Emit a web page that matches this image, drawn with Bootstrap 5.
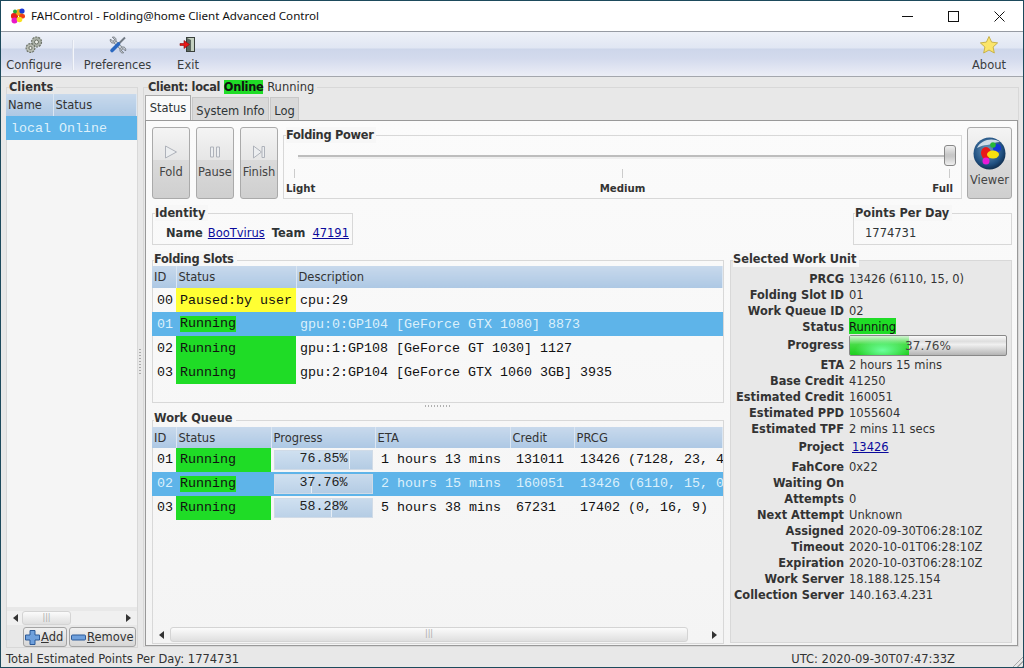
<!DOCTYPE html>
<html lang="en">
<head>
<meta charset="utf-8">
<title>FAHControl</title>
<link href="https://cdn.jsdelivr.net/npm/bootstrap@5.3.0/dist/css/bootstrap.min.css" rel="stylesheet">
<style>
html,body{height:100%;overflow:hidden;background:#1d4a5c;}
body{font:11.5px/16px "DejaVu Sans",sans-serif;color:#2e3436;}
b{font-size:11.4px;font-weight:700;}
.fah-app{width:1024px;height:668px;padding:1px;}
.fah-in{height:100%;background:#e8e8e8;}
.fah-title{height:31px;background:#fff;padding-left:9px;font:11.6px/30px "Noto Sans",sans-serif;color:#111;border-bottom:1px solid #979ba3;flex:none;}
.fah-logo{margin-right:5px;margin-bottom:1px;}
.fah-wc{width:46px;height:30px;}
.fah-wc:last-child{margin-right:1px;}
.fah-tool{height:45px;flex:none;border-bottom:1px solid #a4a7ad;background:linear-gradient(#eef1f8 0,#e0e6f3 37%,#cdd6ea 38%,#d3daed 60%,#eceef6 100%);}
.fah-titem{display:flex;flex-direction:column;align-items:center;color:#3a3d3f;padding-top:3px;height:44px;}
.fah-titem svg{height:20px;margin-bottom:2px;}
.fah-t1{width:66px;margin-right:5px;}
.fah-t2{width:87px;}
.fah-t3{width:54px;}
.fah-t4{width:60px;margin-right:4px;}
.fah-tsep{width:2px;height:30px;margin-top:8px;border-left:1px solid #d9dee9;background:#f4f6fb;}
.fah-main{flex:1;min-height:0;padding-top:10px;}
.fah-frame{border:1px solid #d8d8d8;}
.fah-leg{display:block;width:fit-content;font-weight:700;font-size:11.4px;line-height:16px;margin-top:-9px;margin-left:2px;padding-right:3px;background:#e8e8e8;color:#333;}
.fah-tight{letter-spacing:-.3px;}
.fah-left{width:132px;margin-left:5px;height:561px;flex:none;}
.fah-list{flex:1;background:#f5f5f5;min-height:0;margin-top:-1px;}
.fah-grip{width:5px;flex:none;}
.fah-gripv{width:2px;height:26px;margin:262px 0 0 1px;background:repeating-linear-gradient(#aaa 0 1px,transparent 1px 3px);}
.fah-right{width:876px;height:560px;flex:none;}
.fah-right>.fah-leg{margin-left:4px;}
.fah-run{font-weight:400;font-size:11.5px;letter-spacing:0;}
.fah-tabs{padding-left:1px;height:24px;margin-top:1px;flex:none;}
.fah-tab{height:23px;margin-top:1px;margin-right:1px;border:1px solid #c8c8c8;border-bottom:0;background:#d9d9d9;line-height:26px;text-align:center;}
.fah-tab.on{background:#fafafa;height:25px;margin-top:-1px;margin-bottom:-1px;border-color:#aaa;position:relative;z-index:1;line-height:25px;}
.fah-tw1{width:46px;}
.fah-tw2{width:77px;}
.fah-tw3{width:29px;}
.fah-page{margin-left:1px;width:873px;height:527px;border:1px solid #999;background:linear-gradient(#fbfbfb,#f4f4f4);padding:6px 5px 0 6px;}
.fah-page .fah-leg{background:#f7f7f7;}
.fah-act{width:38px;height:72px;border:1px solid #aaa;border-radius:3px;background:linear-gradient(#f4f4f4 0,#e6e6e6 45%,#dadada 46%,#cfcfcf 100%);color:#444;display:flex;flex-direction:column;align-items:center;padding-top:17px;margin-right:6px;flex:none;}
.fah-act svg{margin-bottom:5px;}
.fah-view{width:45px;padding-top:9px;margin:0 0 0 5px;}
.fah-view svg{margin-bottom:2px;}
.fah-power{height:64px;margin-top:8px;padding:0 2px;flex:1;margin-left:-1px;}
.fah-power .fah-leg{margin-left:0;}
.fah-track{height:2px;background:#bdbdbd;box-shadow:0 2px 0 #efefef;margin:12px 5px 0 12px;position:relative;}
.fah-thumb{position:absolute;right:-2px;top:-10px;width:12px;height:21px;border:1px solid #888;border-radius:3px;background:linear-gradient(#efefef,#c7c7c7 45%,#c7c7c7 55%,#efefef);}
.fah-ticks{margin:12px 9px 0 8px;height:9px;}
.fah-ticks i{display:block;width:1px;height:9px;background:#ccc;}
.fah-scale{display:grid;grid-template-columns:1fr auto 1fr;font-size:10.2px;font-weight:700;line-height:14px;color:#333;margin-top:4px;padding-right:6px;}
.fah-scale span:nth-child(2){margin-left:6px;}
.fah-scale span:nth-child(3){text-align:right;}
.fah-identity{width:201px;height:32px;margin-top:14px;padding-left:13px;}
.fah-identity .fah-leg{margin-left:-11px;}
.fah-idrow{line-height:16px;padding-top:4px;}
.fah-idrow a{margin:0 7px 0 5px;}
.fah-idrow a:last-child{margin:0 0 0 7px;}
.fah-ppd{width:159px;height:32px;margin-top:14px;}
.fah-ppd .fah-leg{margin-left:1px;}
.fah-ppdv{padding:4px 0 0 11px;}
.fah-link{color:#0a0a9c;text-decoration:underline;}
.fah-cols{margin-top:15px;}
.fah-lcol{width:572px;flex:none;}
.fah-slots{height:143px;padding-top:5px;}
.fah-slots .fah-leg{margin-top:-15px;margin-bottom:-1px;margin-left:1px;}
.fah-hgrip{height:15px;}
.fah-hgrip i{display:block;width:26px;height:2px;margin:2px auto 0;background:repeating-linear-gradient(90deg,#b0b0b0 0 1px,transparent 1px 3px);}
.fah-queue{height:224px;padding-top:7px;}
.fah-queue .fah-leg{margin-top:-18px;margin-bottom:1px;margin-left:1px;}
.fah-tbl{table-layout:fixed;width:571px;margin:0 0 0 -1px;border-collapse:collapse;color:#111;--bs-table-bg:transparent;}
.fah-cl{width:131px;}
.fah-tbl th{font-weight:400;height:22px;padding:0 0 0 2px;background:linear-gradient(#c8d9ec,#adc8e4);border-right:1px solid #dbe6f2;border-bottom:0;color:#333;vertical-align:middle;white-space:nowrap;overflow:hidden;}
.fah-queue .fah-tbl th{height:21px;}
.fah-tbl td{font:13.33px/15px "Liberation Mono",monospace;height:24px;padding:0 0 0 4px;border:0;white-space:nowrap;overflow:hidden;background:transparent;vertical-align:middle;color:#111;}
.fah-queue .fah-tbl td{padding-bottom:1px;}
.fah-tbl tr.sel td{background:#5eb4e9;color:#dcf0fb;}
.fah-tbl td.g{background:#1fdc26;color:#111;}
.fah-tbl td.y{background:#ffff33;color:#111;}
.fah-tbl tr.sel td.g{background:#5eb4e9;color:#111;}
.fah-tbl tr.sel td.g span{background:#1fdc26;display:inline-block;line-height:16px;}
.fah-tbl td.ids{padding-left:5px;}
.fah-tbl td.lc{padding-left:5px;}
.fah-queue .fah-tbl td.b{padding:0 2px 0 3px;}
.fah-tbl td.p6{padding-left:6px;}
.c47{width:47px;}.c24{width:24px;}.c120{width:120px;}.c95{width:95px;}.c104{width:104px;}.c135{width:135px;}.c64{width:64px;}
.fah-bar{height:20px;border:1px solid #d0dbe7;color:#222;text-align:center;background:linear-gradient(#c8daec,#b4cce4);position:relative;}
.fah-bar i{position:absolute;left:0;top:0;bottom:0;background:linear-gradient(#cfe0f0,#bcd2e8);border-right:1px solid #e6eef6;}
.fah-bar span{position:relative;}
.fah-wu{width:282px;height:383px;margin-left:6px;background:#e8e8e8;padding-top:2px;}
.fah-page .fah-wu .fah-leg{margin-top:-12px;margin-bottom:-1px;}
.fah-wgrid{display:grid;grid-template-columns:113px 1fr;column-gap:5px;grid-template-rows:repeat(4,16px) 22px repeat(5,16px) 22px repeat(9,16px);margin-top:4px;color:#333;line-height:18px;}
.fah-wgrid>b{text-align:right;white-space:nowrap;}
.fah-wgrid>.tall{line-height:23px;}
.fah-lk{padding-left:3px;}
.fah-pb{width:158px;height:21px;margin-top:1px;border:1px solid #888;border-radius:2px;background:linear-gradient(#fafafa,#dedede 28%,#f0f0f0 45%,#b4b4b4 100%);text-align:center;line-height:20px;position:relative;color:#444;font-size:12px;overflow:hidden;}
.fah-pb i{position:absolute;left:0;top:0;bottom:0;background:radial-gradient(ellipse at 55% 75%,#6cff9c,transparent 60%),linear-gradient(#d4f4d4,#46dc46 45%,#1ecf1e);}
.fah-pb span{position:relative;}
.fah-on{background:#1fdc26;color:#111;font-weight:700;}
.fah-wgrid .fah-on{font-weight:400;display:block;width:fit-content;height:16px;line-height:18px;}
.fah-scroll{height:15px;flex:none;padding:0 3px;}
.fah-sl{margin-top:4px;height:14px;background:#f0f0f0;}
.fah-sl .fah-thumbh{width:49px;margin-left:4px;}
.fah-thumbh{height:14px;border:1px solid #d4d4d4;border-radius:3px;background:linear-gradient(#fbfbfb,#dfdfdf);color:#aaa;font-size:8px;line-height:12px;text-align:center;}
.fah-arr{width:0;height:0;border:4px solid transparent;}
.fah-arr.l{border-right:5px solid #333;border-left:0;margin-left:3px;}
.fah-arr.r{border-left:5px solid #333;border-right:0;margin-right:3px;}
.fah-hsb{margin-top:auto;margin-bottom:1px;}
.fah-hsb .fah-thumbh{margin:0 24px 0 6px;height:15px;}
.fah-btns{gap:2px;padding:2px 1px 0 0;height:22px;}
.fah-mini{height:20px;border:1px solid #a4a4a4;border-radius:3px;background:linear-gradient(#f0f0f0,#d6d6d6);padding:0 1px;display:flex;align-items:center;gap:1px;color:#333;}
.fah-mini u{text-decoration:underline;}
.fah-m1{width:44px;}
.fah-m2{width:67px;}
.fah-status{height:17px;flex:none;padding:0 68px 0 5px;line-height:18px;color:#333;position:relative;}
.fah-resize{position:absolute;right:0;bottom:0;width:13px;height:13px;background:repeating-linear-gradient(135deg,transparent 0 2px,#aaa 2px 3px);clip-path:polygon(100% 0,100% 100%,0 100%);}
</style>
</head>
<body>
<div class="fah-app">
<div class="fah-in d-flex flex-column">
  <div class="fah-title d-flex align-items-center">
    <svg class="fah-logo" width="16" height="16" viewBox="0 0 16 16"><rect x="1" y="5" width="7" height="6" rx="2.500" fill="#e8201c"/><circle cx="9.500" cy="4.500" r="3.400" fill="#f0a818"/><circle cx="12" cy="3" r="2.600" fill="#1c3ad8"/><rect x="9" y="6" width="6" height="4.500" rx="2" fill="#f04018"/><circle cx="4.500" cy="12.500" r="3" fill="#e818c8"/><circle cx="9.500" cy="11.500" r="2.800" fill="#f8e020"/><circle cx="5" cy="3.400" r="2" fill="#26a83a"/></svg>
    <span class="flex-grow-1">FAHControl - Folding@home Client Advanced Control</span>
    <div class="fah-wc d-flex align-items-center justify-content-center"><svg width="11" height="11"><path d="M0 5.500h11" stroke="#111"/></svg></div>
    <div class="fah-wc d-flex align-items-center justify-content-center"><svg width="11" height="11"><rect x=".5" y=".5" width="10" height="10" fill="none" stroke="#111"/></svg></div>
    <div class="fah-wc d-flex align-items-center justify-content-center"><svg width="11" height="11"><path d="M.5.500l10 10M10.500.500l-10 10" stroke="#111"/></svg></div>
  </div>
  <div class="fah-tool d-flex">
    <div class="fah-titem fah-t1"><svg width="20" height="20" viewBox="0 0 20 20"><circle cx="12.500" cy="7" r="5" fill="#aab0a6" stroke="#6c7268" stroke-width="1.200" stroke-dasharray="2 1.100"/><circle cx="12.500" cy="7" r="2" fill="#eef0ea" stroke="#6c7268"/><circle cx="6.500" cy="13" r="4.400" fill="#b8bcb2" stroke="#6c7268" stroke-width="1.200" stroke-dasharray="2 1"/><circle cx="6.500" cy="13" r="1.600" fill="#eef0ea" stroke="#6c7268"/></svg>Configure</div>
    <div class="fah-tsep"></div>
    <div class="fah-titem fah-t2"><svg width="20" height="20" viewBox="0 0 20 20"><path d="M5.500 5.500l9 9" stroke="#7b838b" stroke-width="3.600"/><path d="M5.500 5.500l9 9" stroke="#d4d8dc" stroke-width="2"/><path d="M2.500 4L5 6.500 6.800 4.800 4.300 2.200C6.500 1.300 9 3.500 7.700 6.500L6.500 7.700C3.500 9 1.500 6.500 2.500 4zM17.500 16L15 13.500 13.200 15.200 15.700 17.800C13.500 18.700 11 16.500 12.300 13.500L13.500 12.300C16.500 11 18.500 13.500 17.500 16z" fill="#c4cad0" stroke="#6a7078" stroke-width=".8"/><path d="M17 2.500l-7 7" stroke="#717a84" stroke-width="2"/><path d="M10.500 9L4 15.500" stroke="#2a68c0" stroke-width="3.600" stroke-linecap="round"/></svg>Preferences</div>
    <div class="fah-titem fah-t3"><svg width="20" height="20" viewBox="0 0 20 20"><rect x="8.500" y="2.500" width="8" height="14" fill="#c4d0c0" stroke="#39403c"/><path d="M9 3l4 2v11H9z" fill="#5a665e"/><path d="M2 8.500h4V5.500l5.500 4L6 13.500v-3H2z" fill="#e81818" stroke="#8a0c0c" stroke-width=".6"/></svg>Exit</div>
    <div class="flex-grow-1"></div>
    <div class="fah-titem fah-t4"><svg width="20" height="20" viewBox="0 0 20 20"><path d="M10 1.500l2.600 5.600 6 .8-4.500 4.100 1.200 6L10 15l-5.300 3 1.200-6L1.400 7.900l6-.8z" fill="#fbe56a" stroke="#c8b24a"/></svg>About</div>
  </div>
  <div class="fah-main d-flex">
    <div class="fah-left fah-frame d-flex flex-column">
      <span class="fah-leg">Clients</span>
      <div class="fah-list d-flex flex-column">
        <table class="table fah-tbl fah-cl"><colgroup><col class="c47"><col></colgroup>
          <thead><tr><th>Name</th><th>Status</th></tr></thead>
          <tbody><tr class="sel"><td class="lc" colspan="2">local Online</td></tr></tbody></table>
      </div>
      <div class="fah-scroll fah-sl d-flex align-items-center">
        <span class="fah-arr l"></span>
        <div class="fah-thumbh">|||</div>
        <span class="fah-arr r ms-auto"></span>
      </div>
      <div class="fah-btns d-flex justify-content-end">
        <div class="fah-mini fah-m1"><svg width="15" height="15" viewBox="0 0 15 15"><path d="M5 .5h5v4.500h4.500v5H10v4.500H5V10H.5V5H5z" fill="#6fa0dc" stroke="#2d5a98"/></svg><span><u>A</u>dd</span></div>
        <div class="fah-mini fah-m2"><svg width="15" height="9" viewBox="0 0 15 9"><rect x=".5" y="2" width="14" height="5" rx="1" fill="#6fa0dc" stroke="#2d5a98"/></svg><span><u>R</u>emove</span></div>
      </div>
    </div>
    <div class="fah-grip"><div class="fah-gripv"></div></div>
    <div class="fah-right fah-frame d-flex flex-column">
      <span class="fah-leg fah-tight">Client: local <span class="fah-on">Online</span> <span class="fah-run">Running</span></span>
      <div class="fah-tabs d-flex">
        <div class="fah-tab fah-tw1 on">Status</div><div class="fah-tab fah-tw2">System Info</div><div class="fah-tab fah-tw3">Log</div>
      </div>
      <div class="fah-page d-flex flex-column">
        <div class="d-flex">
          <div class="fah-act"><svg width="14" height="14" viewBox="0 0 14 14"><path d="M1.500 1l11 6-11 6z" fill="#eceef0" stroke="#aeb2ba"/></svg>Fold</div>
          <div class="fah-act"><svg width="14" height="14" viewBox="0 0 14 14"><path d="M2.500 2h3v10h-3zM8.500 2h3v10h-3z" fill="#eceef0" stroke="#aeb2ba"/></svg>Pause</div>
          <div class="fah-act"><svg width="14" height="14" viewBox="0 0 14 14"><path d="M1.500 1l8 6-8 6zM10 1.500h2.500v11H10z" fill="#eceef0" stroke="#aeb2ba"/></svg>Finish</div>
          <div class="fah-power fah-frame">
            <span class="fah-leg fah-tight">Folding Power</span>
            <div class="fah-track"><div class="fah-thumb"></div></div>
            <div class="fah-ticks d-flex justify-content-between"><i></i><i></i><i></i></div>
            <div class="fah-scale"><span>Light</span><span>Medium</span><span>Full</span></div>
          </div>
          <div class="fah-act fah-view"><svg width="33" height="33" viewBox="0 0 33 33"><defs><radialGradient id="gl" cx=".45" cy=".4" r=".65"><stop offset="0" stop-color="#6f9cc0"/><stop offset=".7" stop-color="#1f4f80"/><stop offset="1" stop-color="#0c2440"/></radialGradient></defs><circle cx="16.500" cy="16.500" r="16" fill="url(#gl)"/><path d="M4 11C8 3 19 0 27 5c-6 0-9 3-13 3-3 0-6 1-10 3z" fill="#e8eef4" opacity=".85"/><circle cx="24" cy="11" r="4" fill="#1438d8"/><circle cx="20" cy="8" r="2.800" fill="#28b838"/><ellipse cx="13" cy="16" rx="5" ry="6" fill="#e81818"/><ellipse cx="20" cy="17.500" rx="6" ry="4" fill="#f8e010"/><circle cx="13" cy="24" r="3.500" fill="#e818d8"/></svg>Viewer</div>
        </div>
        <div class="d-flex justify-content-between">
          <div class="fah-identity fah-frame"><span class="fah-leg">Identity</span><div class="fah-idrow d-flex"><b>Name</b><a class="fah-link" href="#">BooTvirus</a><b>Team</b><a class="fah-link" href="#">47191</a></div></div>
          <div class="fah-ppd fah-frame"><span class="fah-leg">Points Per Day</span><div class="fah-ppdv">1774731</div></div>
        </div>
        <div class="fah-cols d-flex">
          <div class="fah-lcol">
            <div class="fah-slots fah-frame">
              <span class="fah-leg fah-tight">Folding Slots</span>
              <table class="table fah-tbl"><colgroup><col class="c24"><col class="c120"><col></colgroup>
                <thead><tr><th>ID</th><th>Status</th><th>Description</th></tr></thead>
                <tbody>
                <tr><td class="ids">00</td><td class="y">Paused:by user</td><td>cpu:29</td></tr>
                <tr class="sel"><td class="ids">01</td><td class="g"><span>Running</span></td><td>gpu:0:GP104 [GeForce GTX 1080] 8873</td></tr>
                <tr><td class="ids">02</td><td class="g">Running</td><td>gpu:1:GP108 [GeForce GT 1030] 1127</td></tr>
                <tr><td class="ids">03</td><td class="g">Running</td><td>gpu:2:GP104 [GeForce GTX 1060 3GB] 3935</td></tr>
                </tbody></table>
            </div>
            <div class="fah-hgrip"><i></i></div>
            <div class="fah-queue fah-frame d-flex flex-column">
              <span class="fah-leg">Work Queue</span>
              <table class="table fah-tbl"><colgroup><col class="c24"><col class="c95"><col class="c104"><col class="c135"><col class="c64"><col></colgroup>
                <thead><tr><th>ID</th><th>Status</th><th>Progress</th><th>ETA</th><th>Credit</th><th>PRCG</th></tr></thead>
                <tbody>
                <tr><td class="ids">01</td><td class="g">Running</td><td class="b"><div class="fah-bar"><i style="width:76.85%"></i><span>76.85%</span></div></td><td class="p6">1 hours 13 mins</td><td class="p6">131011</td><td class="p6">13426 (7128, 23, 41)</td></tr>
                <tr class="sel"><td class="ids">02</td><td class="g"><span>Running</span></td><td class="b"><div class="fah-bar"><i style="width:37.76%"></i><span>37.76%</span></div></td><td class="p6">2 hours 15 mins</td><td class="p6">160051</td><td class="p6">13426 (6110, 15, 0)</td></tr>
                <tr><td class="ids">03</td><td class="g">Running</td><td class="b"><div class="fah-bar"><i style="width:58.28%"></i><span>58.28%</span></div></td><td class="p6">5 hours 38 mins</td><td class="p6">67231</td><td class="p6">17402 (0, 16, 9)</td></tr>
                </tbody></table>
              <div class="fah-scroll fah-hsb d-flex align-items-center">
                <span class="fah-arr l"></span>
                <div class="fah-thumbh flex-grow-1">|||</div>
                <span class="fah-arr r"></span>
              </div>
            </div>
          </div>
          <div class="fah-wu fah-frame">
            <span class="fah-leg">Selected Work Unit</span>
            <div class="fah-wgrid">
              <b>PRCG</b><span>13426 (6110, 15, 0)</span>
              <b>Folding Slot ID</b><span>01</span>
              <b>Work Queue ID</b><span>02</span>
              <b>Status</b><span><span class="fah-on">Running</span></span>
              <b class="tall">Progress</b><div class="fah-pb"><i style="width:37.76%"></i><span>37.76%</span></div>
              <b>ETA</b><span>2 hours 15 mins</span>
              <b>Base Credit</b><span>41250</span>
              <b>Estimated Credit</b><span>160051</span>
              <b>Estimated PPD</b><span>1055604</span>
              <b>Estimated TPF</b><span>2 mins 11 secs</span>
              <b class="tall">Project</b><span class="tall fah-lk"><a class="fah-link" href="#">13426</a></span>
              <b>FahCore</b><span>0x22</span>
              <b>Waiting On</b><span></span>
              <b>Attempts</b><span>0</span>
              <b>Next Attempt</b><span>Unknown</span>
              <b>Assigned</b><span>2020-09-30T06:28:10Z</span>
              <b>Timeout</b><span>2020-10-01T06:28:10Z</span>
              <b>Expiration</b><span>2020-10-03T06:28:10Z</span>
              <b>Work Server</b><span>18.188.125.154</span>
              <b>Collection Server</b><span>140.163.4.231</span>
            </div>
          </div>
        </div>
      </div>
    </div>
  </div>
  <div class="fah-status d-flex justify-content-between"><span>Total Estimated Points Per Day: 1774731</span><span>UTC: 2020-09-30T07:47:33Z</span><div class="fah-resize"></div></div>
</div>
</div>
</body>
</html>
